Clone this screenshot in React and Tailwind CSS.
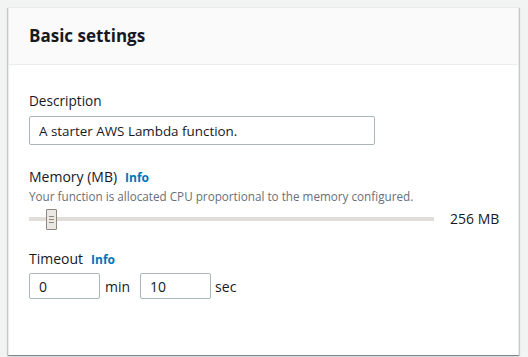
const Info = () => (
  <a href="#" className="ml-[8px] text-[12px] font-bold text-[#0073bb] leading-5">
    Info
  </a>
);

const App = () => {
  return (
    <div
      className="min-h-screen bg-[#f2f3f3] pt-[7px] pl-2 text-[#16191f]"
      style={{ fontFamily: '"Open Sans", "Noto Sans", Arial, sans-serif' }}
    >
      <div className="w-[511px] bg-white border-l border-r border-[#eaeded] shadow-[0_1px_1px_0_rgba(0,28,36,0.3),1px_1px_1px_0_rgba(0,28,36,0.15),-1px_1px_1px_0_rgba(0,28,36,0.15)]">
        <div className="h-[58px] bg-[#fafafa] border-t border-b border-[#eaeded] px-5 flex items-center">
          <h2 className="text-[17px] font-bold leading-6 whitespace-nowrap">Basic settings</h2>
        </div>

        <div className="px-5 pt-[26px] pb-[56px] whitespace-nowrap">
          <label className="block text-[13.6px] leading-5">Description</label>
          <input
            type="text"
            defaultValue="A starter AWS Lambda function."
            className="mt-[5px] block w-[346px] h-[29px] px-[9px] text-[13.4px] border border-[#aab7b8] rounded-[2px] outline-none"
          />

          <div className="mt-[22px] flex items-baseline">
            <span className="text-[14px] leading-5">Memory (MB)</span>
            <Info />
          </div>
          <p className="text-[11.7px] leading-4 text-[#687078]">
            Your function is allocated CPU proportional to the memory configured.
          </p>
          <div className="mt-[2px] h-[25px] flex items-center">
            <div className="relative shrink-0 w-[405px] h-[4px] bg-[#e1ddd8]">
              <div className="absolute left-[17px] top-[-8px] w-[11px] h-[21px] bg-[#ebe8e4] border border-[#8d8780] rounded-[1px] flex flex-col items-center justify-center gap-[2px]">
                <span className="block w-[5px] h-px bg-[#8d8780]" />
                <span className="block w-[5px] h-px bg-[#8d8780]" />
                <span className="block w-[5px] h-px bg-[#8d8780]" />
              </div>
            </div>
            <span className="ml-4 text-[14px] leading-5">256 MB</span>
          </div>

          <div className="mt-[18px] flex items-baseline">
            <span className="text-[14px] leading-5">Timeout</span>
            <Info />
          </div>
          <div className="mt-[3px] flex items-center text-[14px]">
            <input
              type="text"
              defaultValue="0"
              className="w-[71px] h-[26px] px-[9px] border border-[#aab7b8] rounded-[2px] outline-none"
            />
            <span className="ml-[5px]">min</span>
            <input
              type="text"
              defaultValue="10"
              className="ml-[10px] w-[71px] h-[26px] px-[9px] border border-[#aab7b8] rounded-[2px] outline-none"
            />
            <span className="ml-[4px]">sec</span>
          </div>
        </div>
      </div>
    </div>
  );
};

export default App;
